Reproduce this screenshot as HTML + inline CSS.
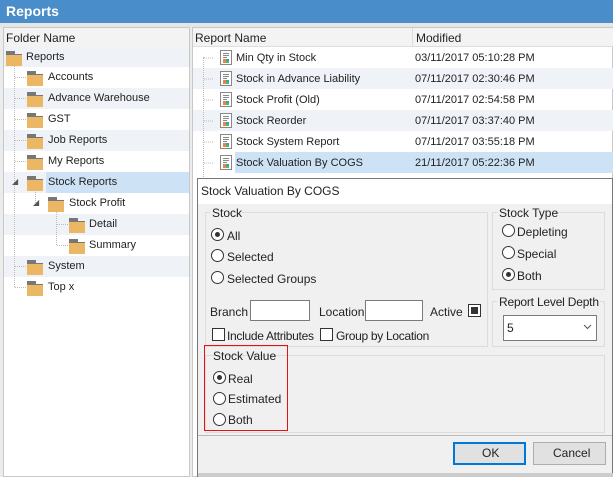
<!DOCTYPE html>
<html><head><meta charset="utf-8"><style>
*{margin:0;padding:0;box-sizing:border-box}
body{width:613px;height:477px;position:relative;overflow:hidden;background:#ececec;font-family:"Liberation Sans",sans-serif;font-size:11px;color:#222}
.a{position:absolute}
.t{position:absolute;white-space:nowrap}
.fold{position:absolute;width:16px;height:14px}
.fold:before{content:"";position:absolute;left:0;top:0;width:9px;height:3px;background:#777}
.fold:after{content:"";position:absolute;left:0;top:3px;width:16px;height:11px;background:#ebb764;border-top:1px solid #777}
.rad{position:absolute;width:13px;height:13px;border:1px solid #333;border-radius:50%;background:#fff}
.rad.on:after{content:"";position:absolute;left:3px;top:3px;width:5px;height:5px;border-radius:50%;background:#333}
.chk{position:absolute;width:13px;height:13px;border:1px solid #333;background:#fff}
.grp{position:absolute;border:1px solid #dcdcdc}
.dot{position:absolute;border-color:#bbb;border-style:dotted;border-width:0}
</style></head><body>
<div class="a" style="left:0;top:0;width:613px;height:23px;background:#4a8dcb"></div>
<div class="t" style="left:6px;top:3px;color:#fff;font-weight:bold;font-size:14px">Reports</div>
<div class="a" style="left:0;top:23px;width:613px;height:4px;background:#e6e6e6"></div>
<!-- left panel -->
<div class="a" style="left:3px;top:27px;width:187px;height:450px;background:#fff;border:1px solid #c8c8c8"></div>
<div class="a" style="left:4px;top:28px;width:185px;height:19px;background:#f3f3f3;border-bottom:1px solid #ddd"></div>
<div class="t" style="left:6px;top:31px;font-size:12px">Folder Name</div>
<div class="a" style="left:4px;top:46px;width:185px;height:21px;background:#eff3f8"></div>
<div class="a" style="left:4px;top:88px;width:185px;height:21px;background:#eff3f8"></div>
<div class="a" style="left:4px;top:130px;width:185px;height:21px;background:#eff3f8"></div>
<div class="a" style="left:4px;top:172px;width:185px;height:21px;background:#eff3f8"></div>
<div class="a" style="left:4px;top:214px;width:185px;height:21px;background:#eff3f8"></div>
<div class="a" style="left:4px;top:256px;width:185px;height:21px;background:#eff3f8"></div>
<div class="a" style="left:46px;top:172px;width:143px;height:21px;background:#cde3f5"></div>
<div class="dot" style="left:14px;top:64px;height:223px;border-left-width:1px"></div>
<div class="dot" style="left:35px;top:190px;height:13px;border-left-width:1px"></div>
<div class="dot" style="left:56px;top:211px;height:34px;border-left-width:1px"></div>
<div class="fold" style="left:6px;top:51px"></div><div class="t" style="left:26px;top:51px">Reports</div>
<div class="dot" style="left:15px;top:77px;width:11px;border-top-width:1px"></div><div class="fold" style="left:27px;top:71px"></div><div class="t" style="left:48px;top:71px">Accounts</div>
<div class="dot" style="left:15px;top:98px;width:11px;border-top-width:1px"></div><div class="fold" style="left:27px;top:92px"></div><div class="t" style="left:48px;top:92px">Advance Warehouse</div>
<div class="dot" style="left:15px;top:119px;width:11px;border-top-width:1px"></div><div class="fold" style="left:27px;top:113px"></div><div class="t" style="left:48px;top:113px">GST</div>
<div class="dot" style="left:15px;top:140px;width:11px;border-top-width:1px"></div><div class="fold" style="left:27px;top:134px"></div><div class="t" style="left:48px;top:134px">Job Reports</div>
<div class="dot" style="left:15px;top:161px;width:11px;border-top-width:1px"></div><div class="fold" style="left:27px;top:155px"></div><div class="t" style="left:48px;top:155px">My Reports</div>
<div class="t" style="left:12px;top:177px;font-size:8px;color:#555">◢</div><div class="fold" style="left:27px;top:176px"></div><div class="t" style="left:48px;top:176px">Stock Reports</div>
<div class="t" style="left:33px;top:198px;font-size:8px;color:#555">◢</div><div class="fold" style="left:48px;top:197px"></div><div class="t" style="left:69px;top:197px">Stock Profit</div>
<div class="dot" style="left:57px;top:224px;width:11px;border-top-width:1px"></div><div class="fold" style="left:69px;top:218px"></div><div class="t" style="left:89px;top:218px">Detail</div>
<div class="dot" style="left:57px;top:245px;width:11px;border-top-width:1px"></div><div class="fold" style="left:69px;top:239px"></div><div class="t" style="left:89px;top:239px">Summary</div>
<div class="dot" style="left:15px;top:266px;width:11px;border-top-width:1px"></div><div class="fold" style="left:27px;top:260px"></div><div class="t" style="left:48px;top:260px">System</div>
<div class="dot" style="left:15px;top:287px;width:11px;border-top-width:1px"></div><div class="fold" style="left:27px;top:281px"></div><div class="t" style="left:48px;top:281px">Top x</div>
<!-- right panel -->
<div class="a" style="left:192px;top:27px;width:421px;height:450px;background:#fff;border:1px solid #c8c8c8"></div>
<div class="a" style="left:193px;top:28px;width:420px;height:19px;background:#f3f3f3;border-bottom:1px solid #ddd"></div>
<div class="a" style="left:412px;top:28px;width:1px;height:19px;background:#ddd"></div>
<div class="t" style="left:195px;top:31px;font-size:12px">Report Name</div><div class="t" style="left:416px;top:31px;font-size:12px">Modified</div>
<div class="a" style="left:193px;top:68px;width:420px;height:21px;background:#eff3f8"></div>
<div class="a" style="left:193px;top:110px;width:420px;height:21px;background:#eff3f8"></div>
<div class="a" style="left:235px;top:152px;width:378px;height:21px;background:#cde3f5"></div>
<div class="dot" style="left:203px;top:57px;height:120px;border-left-width:1px"></div>
<svg class="a" style="left:0;top:0" width="613" height="200">
<defs><g id="ri"><rect x=".5" y=".5" width="11" height="14" fill="#fff" stroke="#888"/><path d="M3 3.5h6M3 5.5h6M3 7.5h4" stroke="#888"/><rect x="3" y="9" width="3" height="4" fill="#e8883a"/><rect x="6" y="9" width="3" height="2" fill="#3a9ad9"/><rect x="6" y="11" width="3" height="2" fill="#5cb85c"/></g></defs>
<use href="#ri" x="220" y="50"/><use href="#ri" x="220" y="71"/><use href="#ri" x="220" y="92"/><use href="#ri" x="220" y="113"/><use href="#ri" x="220" y="134"/><use href="#ri" x="220" y="155"/>
<path d="M204 58h10M204 79h10M204 100h10M204 121h10M204 142h10M204 163h10" stroke="#bbb" stroke-dasharray="1 1"/>
</svg>
<div class="t" style="left:236px;top:52px">Min Qty in Stock</div><div class="t" style="left:415px;top:52px">03/11/2017 05:10:28 PM</div>
<div class="t" style="left:236px;top:73px">Stock in Advance Liability</div><div class="t" style="left:415px;top:73px">07/11/2017 02:30:46 PM</div>
<div class="t" style="left:236px;top:94px">Stock Profit (Old)</div><div class="t" style="left:415px;top:94px">07/11/2017 02:54:58 PM</div>
<div class="t" style="left:236px;top:115px">Stock Reorder</div><div class="t" style="left:415px;top:115px">07/11/2017 03:37:40 PM</div>
<div class="t" style="left:236px;top:136px">Stock System Report</div><div class="t" style="left:415px;top:136px">07/11/2017 03:55:18 PM</div>
<div class="t" style="left:236px;top:157px">Stock Valuation By COGS</div><div class="t" style="left:415px;top:157px">21/11/2017 05:22:36 PM</div>
<!-- dialog -->
<div class="a" style="left:197px;top:178px;width:416px;height:299px;background:#f0f0f0;border:1px solid #777"></div>
<div class="a" style="left:198px;top:179px;width:414px;height:25px;background:#fff"></div>
<div class="t" style="left:201px;top:184px;font-size:12px">Stock Valuation By COGS</div>
<div class="grp" style="left:205px;top:212px;width:283px;height:135px"></div>
<div class="a" style="left:210px;top:206px;width:32px;height:12px;background:#f0f0f0"></div><div class="t" style="left:212px;top:206px;font-size:12px">Stock</div>
<div class="rad on" style="left:211px;top:228px"></div><div class="t" style="left:227px;top:229px;font-size:12px">All</div>
<div class="rad" style="left:211px;top:249px"></div><div class="t" style="left:227px;top:250px;font-size:12px">Selected</div>
<div class="rad" style="left:211px;top:271px"></div><div class="t" style="left:227px;top:272px;font-size:12px">Selected Groups</div>
<div class="t" style="left:210px;top:305px;font-size:12px">Branch</div>
<div class="a" style="left:250px;top:300px;width:60px;height:21px;background:#fff;border:1px solid #7a7a7a"></div>
<div class="t" style="left:319px;top:305px;font-size:12px">Location</div>
<div class="a" style="left:365px;top:300px;width:58px;height:21px;background:#fff;border:1px solid #7a7a7a"></div>
<div class="t" style="left:430px;top:305px;font-size:12px">Active</div>
<div class="a" style="left:468px;top:304px;width:13px;height:13px;border:1px solid #333;background:#fff"><div class="a" style="left:2px;top:2px;width:7px;height:7px;background:#333"></div></div>
<div class="chk" style="left:212px;top:328px"></div><div class="t" style="left:227px;top:329px;font-size:12px;letter-spacing:-.3px">Include Attributes</div>
<div class="chk" style="left:320px;top:328px"></div><div class="t" style="left:336px;top:329px;font-size:12px;letter-spacing:-.3px">Group by Location</div>
<div class="grp" style="left:492px;top:212px;width:113px;height:78px"></div>
<div class="a" style="left:497px;top:206px;width:58px;height:12px;background:#f0f0f0"></div><div class="t" style="left:499px;top:206px;font-size:12px">Stock Type</div>
<div class="rad" style="left:502px;top:224px"></div><div class="t" style="left:517px;top:225px;font-size:12px">Depleting</div>
<div class="rad" style="left:502px;top:246px"></div><div class="t" style="left:517px;top:247px;font-size:12px">Special</div>
<div class="rad on" style="left:502px;top:268px"></div><div class="t" style="left:517px;top:269px;font-size:12px">Both</div>
<div class="grp" style="left:492px;top:301px;width:113px;height:46px"></div>
<div class="a" style="left:497px;top:295px;width:103px;height:12px;background:#f0f0f0"></div><div class="t" style="left:499px;top:295px;font-size:12px;letter-spacing:-.2px">Report Level Depth</div>
<div class="a" style="left:503px;top:315px;width:94px;height:26px;background:#fff;border:1px solid #7a7a7a"></div>
<div class="t" style="left:507px;top:321px;font-size:12px">5</div>
<svg class="a" style="left:583px;top:324px" width="9" height="6"><path d="M1 1l3.5 3.5L8 1" stroke="#555" fill="none"/></svg>
<div class="grp" style="left:205px;top:355px;width:400px;height:78px"></div>
<div class="a" style="left:204px;top:345px;width:84px;height:86px;border:1px solid #e81010"></div>
<div class="t" style="left:213px;top:349px;font-size:12px">Stock Value</div>
<div class="rad on" style="left:213px;top:371px"></div><div class="t" style="left:228px;top:372px;font-size:12px">Real</div>
<div class="rad" style="left:213px;top:392px"></div><div class="t" style="left:228px;top:392px;font-size:12px">Estimated</div>
<div class="rad" style="left:213px;top:413px"></div><div class="t" style="left:228px;top:413px;font-size:12px">Both</div>
<div class="a" style="left:198px;top:435px;width:414px;height:1px;background:#bbb"></div>
<div class="a" style="left:453px;top:442px;width:73px;height:23px;background:#e1e1e1;border:2px solid #0078d7"></div>
<div class="t" style="left:482px;top:446px;font-size:12px">OK</div>
<div class="a" style="left:533px;top:442px;width:73px;height:23px;background:#e1e1e1;border:1px solid #adadad"></div>
<div class="t" style="left:553px;top:446px;font-size:12px">Cancel</div>
<div class="a" style="left:198px;top:473px;width:415px;height:4px;background:#ccc"></div>
</body></html>
